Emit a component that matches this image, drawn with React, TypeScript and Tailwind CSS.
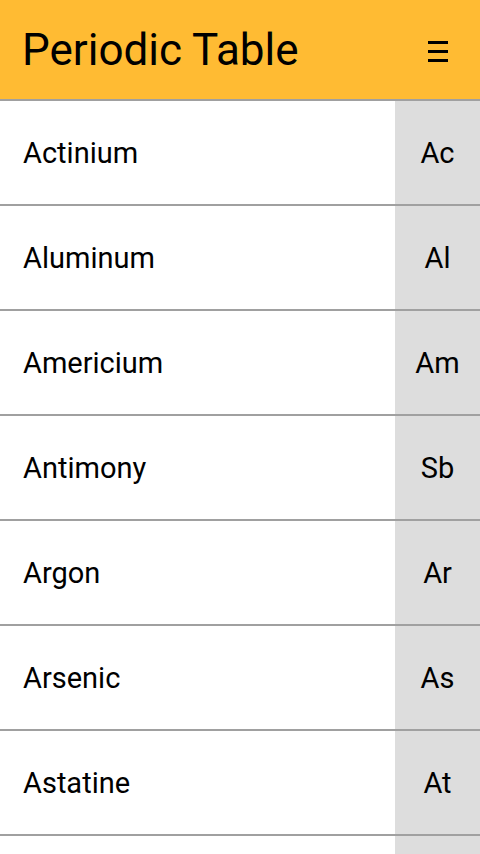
import React from "react";

const elements = [
  { name: "Actinium", symbol: "Ac" },
  { name: "Aluminum", symbol: "Al" },
  { name: "Americium", symbol: "Am" },
  { name: "Antimony", symbol: "Sb" },
  { name: "Argon", symbol: "Ar" },
  { name: "Arsenic", symbol: "As" },
  { name: "Astatine", symbol: "At" },
  { name: "", symbol: "" },
];

const App: React.FC = () => {
  return (
    <div className="h-screen overflow-hidden bg-white font-['Roboto',sans-serif] text-black">
      {/* Header */}
      <div className="flex h-[99px] items-center justify-between bg-[#ffbb33] pl-[22px] pr-[32px]">
        <h1 className="text-[44px] leading-none">Periodic Table</h1>
        <svg width="20" height="22" viewBox="0 0 20 22" className="mt-[2px]">
          <rect x="0" y="1" width="20" height="3" fill="#000" />
          <rect x="0" y="10" width="20" height="3" fill="#000" />
          <rect x="0" y="19" width="20" height="3" fill="#000" />
        </svg>
      </div>

      {/* Element list */}
      <div className="flex flex-col">
        {elements.map((el, i) => (
          <div
            key={i}
            className="flex h-[105px] border-t-2 border-[#a0a0a0]"
          >
            <div className="flex flex-1 items-center pl-[23px] pt-[2px] text-[29px]">
              {el.name}
            </div>
            <div className="flex w-[85px] items-center justify-center bg-[#dddddd] pt-[2px] text-[29px]">
              {el.symbol}
            </div>
          </div>
        ))}
      </div>
    </div>
  );
};

export default App;
